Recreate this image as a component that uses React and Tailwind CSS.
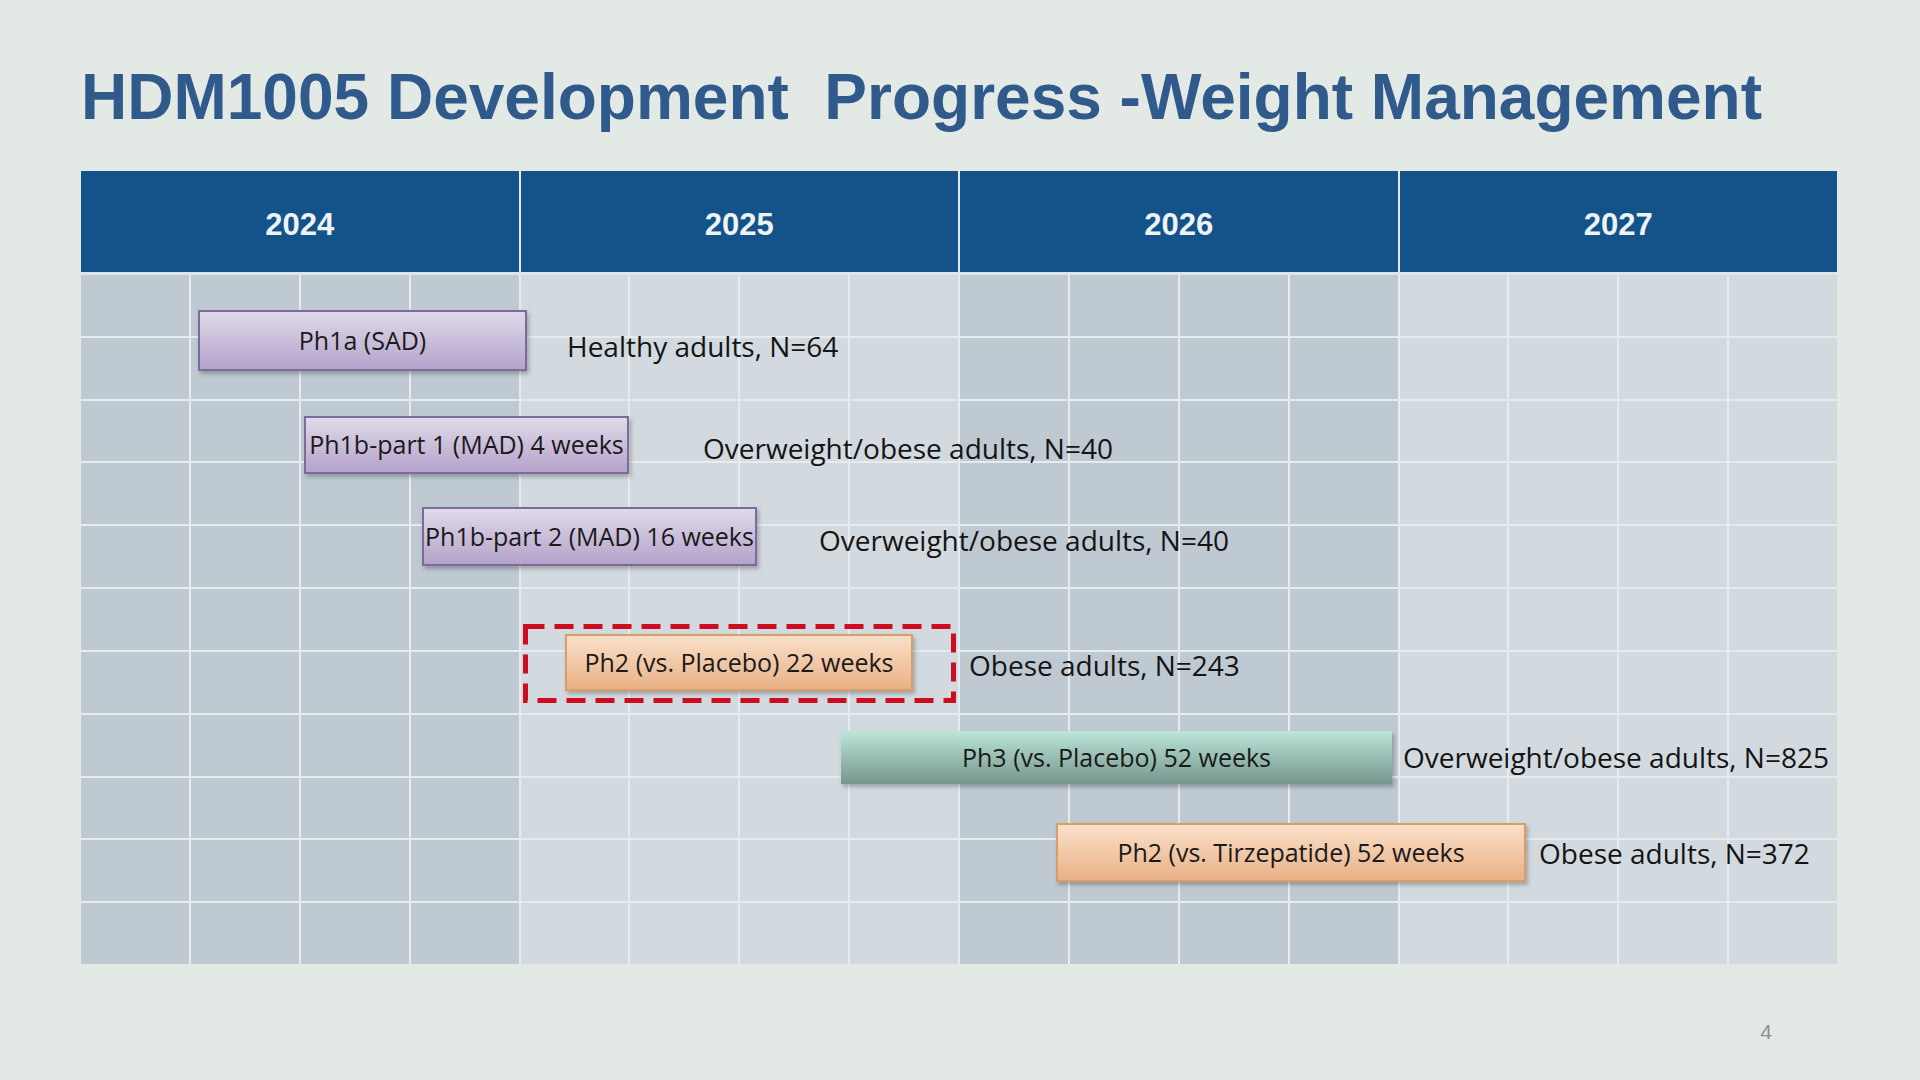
import React from "react";

const years = ["2024", "2025", "2026", "2027"];

const bars = [
  { label: "Ph1a (SAD)", kind: "purple", box: "left-[117px] top-[38px] w-[329px] h-[61px]" },
  { label: "Ph1b-part 1 (MAD) 4 weeks", kind: "purple", box: "left-[223px] top-[144px] w-[325px] h-[58px]" },
  { label: "Ph1b-part 2 (MAD) 16 weeks", kind: "purple", box: "left-[341px] top-[235px] w-[335px] h-[59px]" },
  { label: "Ph2 (vs. Placebo) 22 weeks", kind: "orange", box: "left-[484px] top-[362px] w-[348px] h-[57px]" },
  { label: "Ph3 (vs. Placebo) 52 weeks", kind: "teal", box: "left-[760px] top-[459px] w-[551px] h-[53px]" },
  { label: "Ph2 (vs. Tirzepatide) 52 weeks", kind: "orange", box: "left-[975px] top-[551px] w-[470px] h-[59px]" },
];

const notes = [
  { text: "Healthy adults, N=64", pos: "left-[486px] top-[74px]" },
  { text: "Overweight/obese adults, N=40", pos: "left-[622px] top-[176px]" },
  { text: "Overweight/obese adults, N=40", pos: "left-[738px] top-[268px]" },
  { text: "Obese adults, N=243", pos: "left-[888px] top-[393px]" },
  { text: "Overweight/obese adults, N=825", pos: "left-[1322px] top-[485px]" },
  { text: "Obese adults, N=372", pos: "left-[1458px] top-[581px]" },
];

const barStyles = {
  purple: "bg-gradient-to-b from-[#e0dae9] to-[#b4a3cb] border-2 border-[#7d6b9c]",
  orange: "bg-gradient-to-b from-[#f9e0c9] to-[#e9b186] border-2 border-[#d99d68]",
  teal: "bg-gradient-to-b from-[#bce6d9] to-[#76968d]",
};

function Bar({ label, kind, box }) {
  return (
    <div
      className={`absolute ${box} ${barStyles[kind]} flex items-center justify-center shadow-[2px_3px_4px_rgba(0,0,0,0.25)] text-[25px] text-[#1a1a1a] whitespace-nowrap`}
    >
      {label}
    </div>
  );
}

export default function App() {
  const cells = [];
  for (let r = 0; r < 11; r++) {
    for (let c = 0; c < 16; c++) {
      const dark = Math.floor(c / 4) % 2 === 0;
      cells.push(
        <div key={`${r}-${c}`} className={dark ? "bg-[#bfc9d2]" : "bg-[#d3dadf]"} />
      );
    }
  }

  return (
    <div className="w-[1920px] h-[1080px] bg-[#e3e9e4] pl-[81px] pt-[65px] flex flex-col font-['Liberation_Sans',Arial,sans-serif]">
      <h1 className="text-[64px] leading-none font-bold text-[#2f5a8b] whitespace-pre">
        HDM1005 Development  Progress -Weight Management
      </h1>

      <div className="mt-[42px] w-[1756px]">
        <div className="grid grid-cols-4 gap-[2px] bg-[#e3e9ec] h-[101px]">
          {years.map((y) => (
            <div
              key={y}
              className="bg-[#14538a] flex items-center justify-center pt-[8px] text-[31px] font-bold text-[#eef3f7]"
            >
              {y}
            </div>
          ))}
        </div>

        <div className="relative h-[692px] font-['Open_Sans','Noto_Sans',sans-serif]">
          <div className="grid grid-cols-16 grid-rows-11 gap-[2px] bg-[#e6ebee] h-full border-t-[3px] border-[#dfe6ea]">
            {cells}
          </div>

          {bars.map((b) => (
            <Bar key={b.label} {...b} />
          ))}

          <svg
            className="absolute left-[442px] top-[352px]"
            width="433"
            height="79"
            viewBox="0 0 433 79"
          >
            <rect
              x="2.5"
              y="2.5"
              width="428"
              height="74"
              fill="none"
              stroke="#cc0d1f"
              strokeWidth="5"
              strokeDasharray="19 10"
            />
          </svg>

          {notes.map((n, i) => (
            <div
              key={i}
              className={`absolute ${n.pos} -translate-y-1/2 text-[28px] text-[#141414] whitespace-nowrap leading-none`}
            >
              {n.text}
            </div>
          ))}
        </div>
      </div>

      <div className="w-[1756px] pr-[65px] mt-[52px] text-right text-[21px] text-[#8c9290] font-['Liberation_Sans',Arial,sans-serif]">
        4
      </div>
    </div>
  );
}
